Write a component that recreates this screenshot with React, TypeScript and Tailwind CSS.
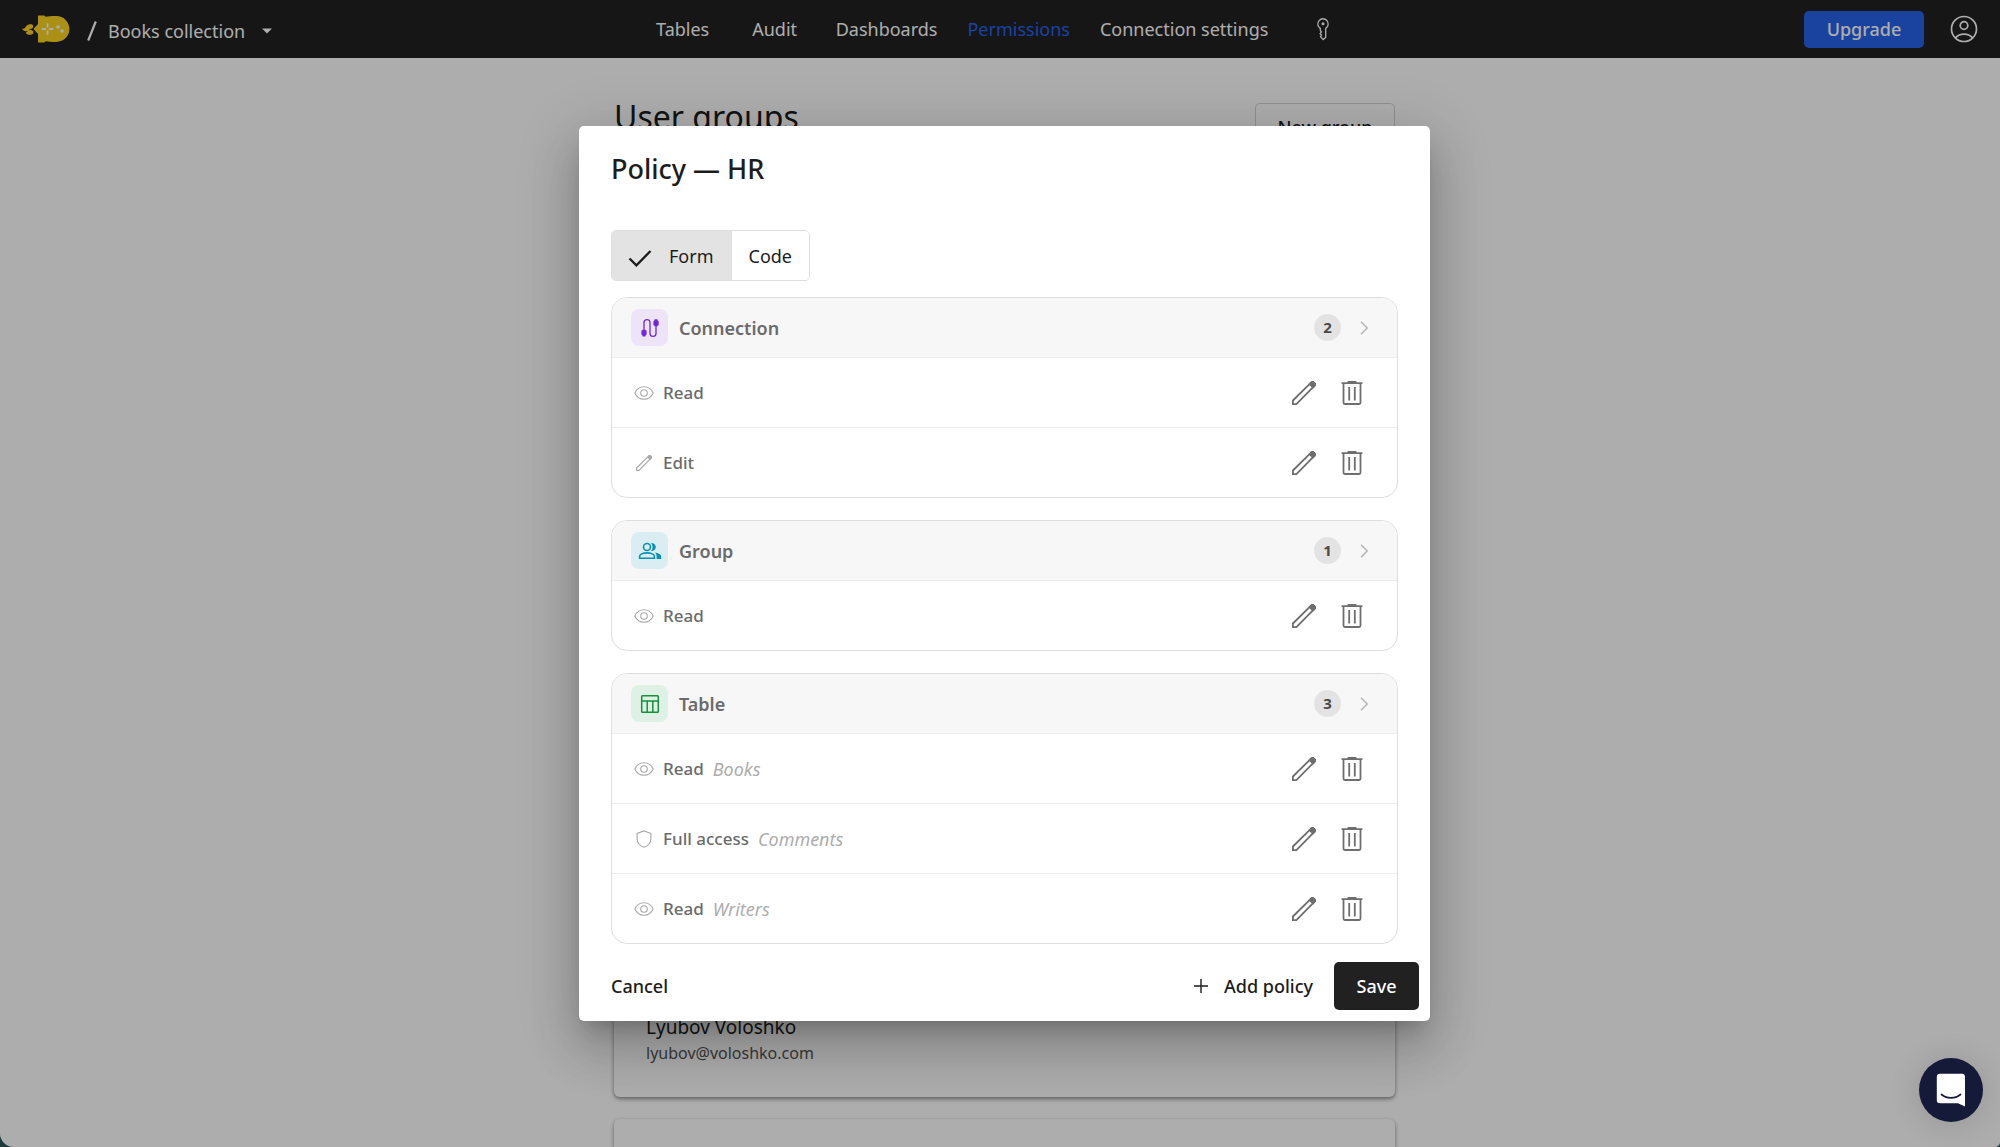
import { useState } from 'react'
import type { ReactNode } from 'react'

type Action = 'read' | 'edit' | 'full'

interface Policy {
  label: string
  action: Action
  target?: string
}

interface PolicyGroup {
  key: string
  label: string
  chip: string
  icon: ReactNode
  items: Policy[]
}

function PencilIcon({ className }: { className: string }) {
  return (
    <svg viewBox="0 0 24 24" className={className} fill="none" stroke="currentColor" strokeWidth="1.8">
      <path d="M.9 23.1v-3.6L19.3 1.4a1.6 1.6 0 0 1 2.2 0l1.1 1.1a1.6 1.6 0 0 1 0 2.2L4.4 23.1z" />
      <path d="M17.6 3.2 21 6.5l1.7-1.9a1.5 1.5 0 0 0 0-2.1l-1.2-1.2a1.5 1.5 0 0 0-2.1 0z" fill="currentColor" />
    </svg>
  )
}

function TrashIcon() {
  return (
    <svg viewBox="0 0 24 24" className="h-6 w-6" fill="none" stroke="currentColor" strokeWidth="1.8">
      <path d="M1.6 2.2h20.8" />
      <path d="M7.6 1h8.8" />
      <path d="M3.5 2.4v19.2c0 .8.5 1.4 1.3 1.4h14.4c.8 0 1.3-.6 1.3-1.4V2.4" />
      <path d="M9.2 6v13.6M14.8 6v13.6" />
    </svg>
  )
}

function EyeIcon() {
  return (
    <svg viewBox="0 0 20 20" className="h-5 w-5" fill="none" stroke="currentColor" strokeWidth="1.1">
      <path d="M.9 10C2.6 6 6 3.8 10 3.8S17.4 6 19.1 10C17.4 14 14 16.2 10 16.2S2.6 14 .9 10z" />
      <circle cx="10" cy="10" r="3.3" />
    </svg>
  )
}

function ShieldIcon() {
  return (
    <svg viewBox="0 0 20 20" className="h-5 w-5" fill="none" stroke="currentColor" strokeWidth="1.1">
      <path d="m10 1.9 6.9 2.6v4.9c0 4.1-2.7 7.5-6.9 8.8-4.2-1.3-6.9-4.7-6.9-8.8V4.5z" />
    </svg>
  )
}

function CableIcon() {
  return (
    <svg viewBox="0 0 20 20" className="h-5 w-5" fill="none" stroke="currentColor" strokeWidth="1.3">
      <path d="M4 14V4.600A3 3 0 0 1 7 1.700a3 3 0 0 1 3 2.900v10.800a3 3 0 0 0 3 2.900 3 3 0 0 0 3-2.900V6" />
      <path d="M2.500 18.600v-1L1.400 16.500v-3.900h.9v-.9h3.400v.9h.9v3.900L5.500 17.600v1z" fill="currentColor" stroke="none" />
      <path d="M14.500 1.200h3v1l1.200 1.200v3.900h-.9v.9h-3.500v-.9h-.9V3.400l1.100-1.200z" fill="currentColor" stroke="none" />
    </svg>
  )
}

function PeopleIcon() {
  return (
    <svg viewBox="0 0 24 20" className="h-5 w-6" fill="none" stroke="currentColor" strokeWidth="1.6">
      <circle cx="9" cy="6" r="3.5" />
      <path d="M1.600 17.200v-1.800c0-2.400 4.100-3.500 7.400-3.500s7.400 1.100 7.400 3.500v1.800z" />
      <path d="M13 1.900c3 0 4.800 1.900 4.800 4.200s-1.800 4.100-4.800 4.100c2.200-2.400 2.200-5.900 0-8.300z" fill="currentColor" stroke="none" />
      <path d="M17 11.500c3.200.600 6.200 1.800 6.200 4.100V18h-4.600v-2.500c0-1.800-.500-3-1.600-4z" fill="currentColor" stroke="none" />
    </svg>
  )
}

function TableIcon() {
  return (
    <svg viewBox="0 0 20 20" className="h-5 w-5" fill="none" stroke="currentColor" strokeWidth="1.5">
      <rect x="1.7" y="1.7" width="16.6" height="16.6" rx=".8" />
      <path d="M1.7 7h16.6M7.2 7v11.3M12.8 7v11.3" />
    </svg>
  )
}

function KeyIcon() {
  return (
    <svg viewBox="0 0 16 24" className="h-6 w-4" fill="none" stroke="currentColor" strokeWidth="1.3">
      <path d="M5.300 11.400a5.200 5.200 0 1 1 5.400 0v9L8.200 22.600l-2.700-2.800 1-1.500-1.400-1.600 1.400-1.700-1.200-1.500z" />
      <circle cx="8" cy="6.8" r="1.5" fill="currentColor" stroke="none" />
    </svg>
  )
}

function AccountIcon() {
  return (
    <svg viewBox="0 0 28 28" className="h-7 w-7" fill="none" stroke="currentColor" strokeWidth="1.7">
      <circle cx="14" cy="14" r="12.5" />
      <circle cx="14" cy="10.5" r="3.8" />
      <path d="M5.4 22.9c2.2-2.400 5.200-3.700 8.600-3.700s6.400 1.300 8.600 3.700" />
    </svg>
  )
}

function Logo() {
  return (
    <svg viewBox="0 0 48 28" className="h-7 w-12" fill="#fdd421">
      <path d="M11.500 14 16 9V.4h6.300l1.400 1.400C26 1.300 29 1.100 34.500 1.100a12.900 12.900 0 0 1 0 25.800c-5.500 0-8.500-.2-10.800-.7l-1.400 1.200H16V19z" />
      <path d="M0 13.800c1.700.2 2.900-.3 3.600-1.700 1-2.300 3.500-3.400 6.700-2.600 1.300 1.300 1.100 3.200-.3 4.100-1 .6-2.200.4-3.200.5.8.8 2.400.8 3.500 1.300 1.400.9 1.400 2.500.4 3.500-2.700 1.600-6 1-7-1.400 1-.1 1.600-.5 2-1.200-2.300.2-4.500-.3-5.700-2.500z" />
      <path d="M25.500 8.300v4.200m0 3v4.200M19.800 14H24m3 0h4.200" stroke="#fff" strokeWidth="1.8" />
      <circle cx="36" cy="12" r="1.8" fill="#fff" />
      <circle cx="40" cy="16" r="1.8" fill="#fff" />
    </svg>
  )
}

const GROUPS: PolicyGroup[] = [
  {
    key: 'connection',
    label: 'Connection',
    chip: 'bg-[#ede4fa] text-[#6d28d9]',
    icon: <CableIcon />,
    items: [
      { label: 'Read', action: 'read' },
      { label: 'Edit', action: 'edit' },
    ],
  },
  {
    key: 'group',
    label: 'Group',
    chip: 'bg-[#d9edf2] text-[#0891b2]',
    icon: <PeopleIcon />,
    items: [{ label: 'Read', action: 'read' }],
  },
  {
    key: 'table',
    label: 'Table',
    chip: 'bg-[#dff1e5] text-[#15903c]',
    icon: <TableIcon />,
    items: [
      { label: 'Read', action: 'read', target: 'Books' },
      { label: 'Full access', action: 'full', target: 'Comments' },
      { label: 'Read', action: 'read', target: 'Writers' },
    ],
  },
]

const NAV = ['Tables', 'Audit', 'Dashboards', 'Permissions', 'Connection settings']

function actionIcon(action: Action) {
  if (action === 'read') return <EyeIcon />
  if (action === 'full') return <ShieldIcon />
  return <PencilIcon className="h-4 w-4" />
}

function Header() {
  return (
    <header className="grid h-[58px] shrink-0 grid-cols-[1fr_auto_1fr] items-center bg-[#212121] text-lg text-white">
      <div className="flex items-center pl-[22px]">
        <a href="#home" aria-label="Home"><Logo /></a>
        <svg viewBox="0 0 12 20" className="ml-4 mt-1 h-5 w-3" fill="none" stroke="currentColor" strokeWidth="2.2">
          <path d="M2.2 19.5 9.8.5" />
        </svg>
        <button className="ml-2.5 mt-1 flex items-center gap-4">
          Books collection
          <svg viewBox="0 0 12 6" className="h-1.5 w-3" fill="currentColor">
            <path d="M1 .5h10l-5 5z" />
          </svg>
        </button>
      </div>

      <nav className="flex items-center">
        {NAV.map(item => (
          <a
            key={item}
            href="#nav"
            className={`min-w-[92px] px-[15px] text-center ${item === 'Permissions' ? 'text-[#2563eb]' : ''}`}
          >
            {item}
          </a>
        ))}
        <a href="#secrets" aria-label="Secrets" className="flex w-20 justify-center"><KeyIcon /></a>
      </nav>

      <div className="flex items-center justify-end gap-[26px] pr-[22px]">
        <button className="h-[37px] w-[120px] rounded-[5px] bg-[#2563eb] font-medium">Upgrade</button>
        <button aria-label="Account"><AccountIcon /></button>
      </div>
    </header>
  )
}

function GroupCard({ group }: { group: PolicyGroup }) {
  return (
    <section className="overflow-hidden rounded-2xl border border-[#dedede]">
      <button className="flex h-[59px] w-full items-center bg-[#f7f7f7] pl-[19px] pr-[25px] text-left">
        <span className={`mr-[11px] flex h-[37px] w-[37px] items-center justify-center rounded-lg ${group.chip}`}>
          {group.icon}
        </span>
        <span className="flex-1 text-lg font-semibold text-[#6b6b6b]">{group.label}</span>
        <span className="flex h-[27px] w-[27px] items-center justify-center rounded-full bg-[#e3e3e3] text-[15px] font-bold text-[#4a4a4a]">
          {group.items.length}
        </span>
        <svg viewBox="0 0 16 16" className="ml-[15px] h-4 w-4" fill="none" stroke="#b5b5b5" strokeWidth="1.5">
          <path d="m5 1.8 6.2 6.2L5 14.2" />
        </svg>
      </button>
      <ul>
        {group.items.map((item, i) => (
          <li key={i} className="flex h-[70px] items-center border-t border-[#ededed] pl-[22px] pr-[21px]">
            <span className="mr-[9px] flex w-5 justify-center text-[#a8a8a8]">{actionIcon(item.action)}</span>
            <span className="text-[17px] font-medium text-[#6b6b6b]">{item.label}</span>
            {item.target && <span className="ml-[9px] text-lg italic text-[#adadad]">{item.target}</span>}
            <div className="ml-auto flex text-[#6e6e6e]">
              <button aria-label={`Edit ${item.label}`} className="flex h-12 w-12 items-center justify-center">
                <PencilIcon className="h-6 w-6" />
              </button>
              <button aria-label={`Delete ${item.label}`} className="flex h-12 w-12 items-center justify-center">
                <TrashIcon />
              </button>
            </div>
          </li>
        ))}
      </ul>
    </section>
  )
}

function PolicyDialog() {
  const [mode, setMode] = useState<'form' | 'code'>('form')

  return (
    <div
      role="dialog"
      aria-labelledby="policy-title"
      className="w-full max-w-[851px] rounded-[5px] bg-white text-[#1c1c1c] shadow-[0_14px_19px_-9px_rgba(0,0,0,0.2),0_30px_48px_4px_rgba(0,0,0,0.14),0_11px_58px_10px_rgba(0,0,0,0.12)]"
    >
      <h2 id="policy-title" className="px-8 pt-[23px] text-[27px] leading-10 font-medium">Policy — HR</h2>

      <div className="px-8 pt-[41px]">
        <div className="flex h-[51px] w-fit overflow-hidden rounded-[5px] border border-[#dedede] text-lg">
          <button
            aria-pressed={mode === 'form'}
            onClick={() => setMode('form')}
            className={`flex items-center pl-[15px] pr-[17px] ${mode === 'form' ? 'bg-[#e3e3e3]' : 'bg-white'}`}
          >
            <svg viewBox="0 0 26 22" className="mr-4 mt-1 h-[22px] w-[26px]" fill="none" stroke="currentColor" strokeWidth="2.3">
              <path d="m2.5 11.5 6.9 6.9L23.5 4" />
            </svg>
            Form
          </button>
          <button
            aria-pressed={mode === 'code'}
            onClick={() => setMode('code')}
            className={`border-l border-[#dedede] px-[17px] ${mode === 'code' ? 'bg-[#e3e3e3]' : 'bg-white'}`}
          >
            Code
          </button>
        </div>

        <div className="mt-4 space-y-[22px]">
          {GROUPS.map(group => <GroupCard key={group.key} group={group} />)}
        </div>
      </div>

      <div className="flex items-center pt-[18px] pr-[11px] pb-[11px] pl-8 text-lg font-medium">
        <button>Cancel</button>
        <button className="ml-auto flex items-center gap-4">
          <svg viewBox="0 0 14 14" className="h-3.5 w-3.5" stroke="currentColor" strokeWidth="1.4">
            <path d="M7 0v14M0 7h14" />
          </svg>
          Add policy
        </button>
        <button className="ml-[21px] h-12 w-[85px] rounded-[5px] bg-[#212121] text-white">Save</button>
      </div>
    </div>
  )
}

export default function App() {
  return (
    <div className="h-screen bg-[#1d3b3a] font-['Noto_Sans',sans-serif]">
      <div className="relative flex h-screen flex-col overflow-hidden rounded-br-[5px] rounded-bl-[14px] bg-white text-[#1c1c1c]">
        <Header />

        <main className="mx-auto flex w-full max-w-[790px] flex-1 flex-col pl-[9px] pt-[45px]">
          <div className="flex items-start justify-between">
            <h1 className="text-[32px] leading-7">User groups</h1>
            <button className="h-12 w-[140px] rounded-[5px] border border-[#d4d4d4] text-lg font-medium">New group</button>
          </div>
          <div className="mt-6 flex flex-1 flex-col justify-end rounded-md px-8 pb-8 shadow-[0_2px_4px_rgba(0,0,0,0.45)]">
            <p className="text-[19px] leading-7">Lyubov Voloshko</p>
            <p className="text-base leading-6 text-[#555]">lyubov@voloshko.com</p>
          </div>
          <div className="mt-[22px] h-7 shrink-0 rounded-t-md shadow-[0_2px_4px_rgba(0,0,0,0.45)]" />
        </main>

        <div className="absolute inset-0 flex items-center justify-center bg-black/32 pl-[9px]">
          <PolicyDialog />
        </div>

        <button
          aria-label="Open chat"
          className="absolute right-[17px] bottom-[25px] flex h-16 w-16 items-center justify-center rounded-full bg-[#161a39] shadow-[0_2px_32px_rgba(0,0,0,0.14)]"
        >
          <svg viewBox="0 0 30 34" className="h-[34px] w-[30px]" fill="none">
            <path d="M4 .7h22A3.200 3.200 0 0 1 29 4v29.500l-7-3.200H4A3.200 3.200 0 0 1 .8 27V4A3.200 3.200 0 0 1 4 .7z" fill="#fff" />
            <path d="M5.500 21.500c5.500 4.500 13.500 4.500 19 0" stroke="#161a39" strokeWidth="1.7" strokeLinecap="round" />
          </svg>
        </button>
      </div>
    </div>
  )
}
